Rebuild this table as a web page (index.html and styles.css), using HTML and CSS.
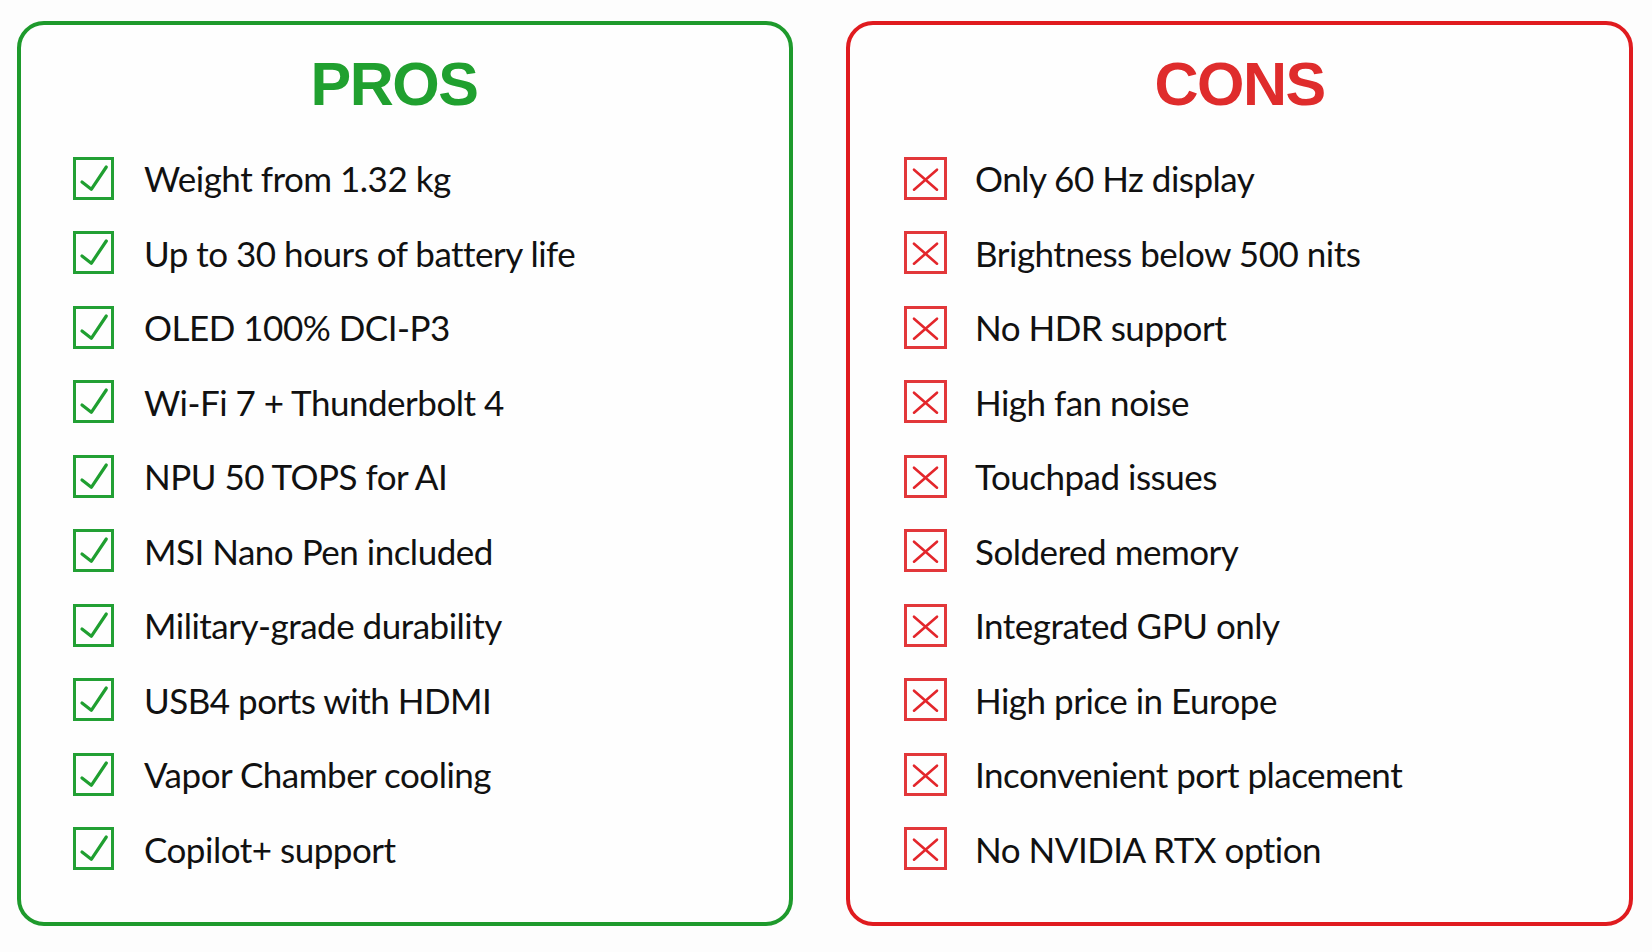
FILE: index.html
```html
<!DOCTYPE html>
<html lang="en">
<head>
<meta charset="utf-8">
<title>Pros and Cons</title>
<link rel="stylesheet" href="styles.css">
</head>
<body>
<main class="board">
  <section class="card card-pros">
    <h2 class="title title-pros">PROS</h2>
    <ul class="list">
      <li class="item"><svg class="mark mark-pro" viewBox="0 0 41 43"><rect x="1.5" y="1.5" width="38" height="40"/><polyline points="9,25 18.3,32.3 33.3,10"/></svg><span>Weight from 1.32 kg</span></li>
      <li class="item"><svg class="mark mark-pro" viewBox="0 0 41 43"><rect x="1.5" y="1.5" width="38" height="40"/><polyline points="9,25 18.3,32.3 33.3,10"/></svg><span>Up to 30 hours of battery life</span></li>
      <li class="item"><svg class="mark mark-pro" viewBox="0 0 41 43"><rect x="1.5" y="1.5" width="38" height="40"/><polyline points="9,25 18.3,32.3 33.3,10"/></svg><span>OLED 100% DCI-P3</span></li>
      <li class="item"><svg class="mark mark-pro" viewBox="0 0 41 43"><rect x="1.5" y="1.5" width="38" height="40"/><polyline points="9,25 18.3,32.3 33.3,10"/></svg><span>Wi-Fi 7 + Thunderbolt 4</span></li>
      <li class="item"><svg class="mark mark-pro" viewBox="0 0 41 43"><rect x="1.5" y="1.5" width="38" height="40"/><polyline points="9,25 18.3,32.3 33.3,10"/></svg><span>NPU 50 TOPS for AI</span></li>
      <li class="item"><svg class="mark mark-pro" viewBox="0 0 41 43"><rect x="1.5" y="1.5" width="38" height="40"/><polyline points="9,25 18.3,32.3 33.3,10"/></svg><span>MSI Nano Pen included</span></li>
      <li class="item"><svg class="mark mark-pro" viewBox="0 0 41 43"><rect x="1.5" y="1.5" width="38" height="40"/><polyline points="9,25 18.3,32.3 33.3,10"/></svg><span>Military-grade durability</span></li>
      <li class="item"><svg class="mark mark-pro" viewBox="0 0 41 43"><rect x="1.5" y="1.5" width="38" height="40"/><polyline points="9,25 18.3,32.3 33.3,10"/></svg><span>USB4 ports with HDMI</span></li>
      <li class="item"><svg class="mark mark-pro" viewBox="0 0 41 43"><rect x="1.5" y="1.5" width="38" height="40"/><polyline points="9,25 18.3,32.3 33.3,10"/></svg><span>Vapor Chamber cooling</span></li>
      <li class="item"><svg class="mark mark-pro" viewBox="0 0 41 43"><rect x="1.5" y="1.5" width="38" height="40"/><polyline points="9,25 18.3,32.3 33.3,10"/></svg><span>Copilot+ support</span></li>
    </ul>
  </section>
  <section class="card card-cons">
    <h2 class="title title-cons">CONS</h2>
    <ul class="list">
      <li class="item"><svg class="mark mark-con" viewBox="0 0 43 43"><rect x="1.5" y="1.5" width="40" height="40"/><path d="M10 12.7 L33 32.7 M33 12.7 L10 32.7"/></svg><span>Only 60 Hz display</span></li>
      <li class="item"><svg class="mark mark-con" viewBox="0 0 43 43"><rect x="1.5" y="1.5" width="40" height="40"/><path d="M10 12.7 L33 32.7 M33 12.7 L10 32.7"/></svg><span>Brightness below 500 nits</span></li>
      <li class="item"><svg class="mark mark-con" viewBox="0 0 43 43"><rect x="1.5" y="1.5" width="40" height="40"/><path d="M10 12.7 L33 32.7 M33 12.7 L10 32.7"/></svg><span>No HDR support</span></li>
      <li class="item"><svg class="mark mark-con" viewBox="0 0 43 43"><rect x="1.5" y="1.5" width="40" height="40"/><path d="M10 12.7 L33 32.7 M33 12.7 L10 32.7"/></svg><span>High fan noise</span></li>
      <li class="item"><svg class="mark mark-con" viewBox="0 0 43 43"><rect x="1.5" y="1.5" width="40" height="40"/><path d="M10 12.7 L33 32.7 M33 12.7 L10 32.7"/></svg><span>Touchpad issues</span></li>
      <li class="item"><svg class="mark mark-con" viewBox="0 0 43 43"><rect x="1.5" y="1.5" width="40" height="40"/><path d="M10 12.7 L33 32.7 M33 12.7 L10 32.7"/></svg><span>Soldered memory</span></li>
      <li class="item"><svg class="mark mark-con" viewBox="0 0 43 43"><rect x="1.5" y="1.5" width="40" height="40"/><path d="M10 12.7 L33 32.7 M33 12.7 L10 32.7"/></svg><span>Integrated GPU only</span></li>
      <li class="item"><svg class="mark mark-con" viewBox="0 0 43 43"><rect x="1.5" y="1.5" width="40" height="40"/><path d="M10 12.7 L33 32.7 M33 12.7 L10 32.7"/></svg><span>High price in Europe</span></li>
      <li class="item"><svg class="mark mark-con" viewBox="0 0 43 43"><rect x="1.5" y="1.5" width="40" height="40"/><path d="M10 12.7 L33 32.7 M33 12.7 L10 32.7"/></svg><span>Inconvenient port placement</span></li>
      <li class="item"><svg class="mark mark-con" viewBox="0 0 43 43"><rect x="1.5" y="1.5" width="40" height="40"/><path d="M10 12.7 L33 32.7 M33 12.7 L10 32.7"/></svg><span>No NVIDIA RTX option</span></li>
    </ul>
  </section>
</main>
</body>
</html>
```
FILE: styles.css
```css
html, body {
  margin: 0;
  padding: 0;
  background: #fdfdfd;
}

body {
  font-family: Lato, "Liberation Sans", Arial, sans-serif;
  color: #111;
}

.board {
  display: grid;
  grid-template-columns: 776px 787px;
  column-gap: 53px;
  padding: 21px 0 0 17px;
}

.card {
  height: 905px;
  box-sizing: border-box;
  border: 4px solid;
  border-radius: 27px;
  background: #fefefe;
}

.card-pros { border-color: #1e9a2c; }
.card-cons { border-color: #e01b1f; }

.title {
  margin: 0;
  padding-top: 24px;
  height: 70px;
  line-height: 70px;
  font-family: "Liberation Sans", Arial, sans-serif;
  font-weight: 700;
  font-size: 61px;
  letter-spacing: -1.5px;
  text-align: center;
}

.title-pros { color: #20a02f; padding-right: 22px; }
.title-cons { color: #df2c2c; }

.list {
  list-style: none;
  margin: 21.75px 0 0 0;
  padding: 0;
}

.card-pros .list { padding-left: 52px; }
.card-cons .list { padding-left: 54px; }

.item {
  display: flex;
  align-items: center;
  height: 74.5px;
  font-size: 35px;
  letter-spacing: -0.5px;
  gap: 30px;
}

.card-cons .item { gap: 28px; }

.mark {
  flex: none;
  height: 43px;
  fill: none;
  stroke-width: 3;
}

.mark-pro { width: 41px; stroke: #22a034; }
.mark-con { width: 43px; stroke: #e2373a; }

.mark-pro polyline { stroke: #1f9f30; stroke-width: 3.2; stroke-linecap: round; stroke-linejoin: round; }
.mark-con path { stroke: #e3262b; stroke-width: 2.6; stroke-linecap: round; }
```
